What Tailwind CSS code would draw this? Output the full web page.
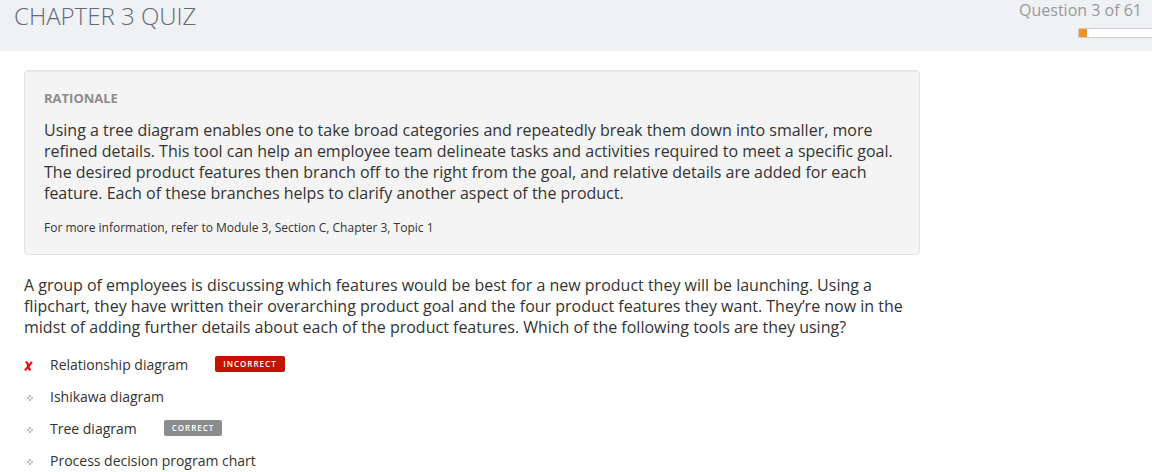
<!DOCTYPE html>
<html lang="en">
<head>
<meta charset="utf-8">
<meta name="viewport" content="width=device-width, initial-scale=1">
<title>Chapter 3 Quiz</title>
<script src="https://cdn.jsdelivr.net/npm/@tailwindcss/browser@4"></script>
</head>
<body class="bg-white font-['Open_Sans',sans-serif] text-[#333333] overflow-x-hidden">
<header class="flex items-start justify-between bg-[#eff1f5] pb-[13px] pl-[14px]">
  <h1 class="text-2xl leading-8 font-light text-[#5f6b78]">CHAPTER 3 QUIZ</h1>
  <div class="flex flex-col items-end">
    <p id="progress" class="pr-[10px] text-base leading-[21px] text-[#999999]">Question 3 of 61</p>
    <div role="progressbar" aria-labelledby="progress" aria-valuenow="3" aria-valuemin="0" aria-valuemax="61" class="mt-[7px] h-[10px] w-[74px] rounded-l-xs border border-r-0 border-[#cccccc] bg-white">
      <div class="h-full w-2 bg-[#f59322]"></div>
    </div>
  </div>
</header>
<main class="max-w-[944px] px-6 pt-[19px]">
  <section class="rounded border border-[#e3e3e3] bg-[#f4f4f4] px-[19px] pt-[17px] pb-4 shadow-[inset_0_1px_1px_rgba(0,0,0,0.05)]">
    <h2 class="text-[13px] leading-5 font-bold text-[#8c8c8c]">RATIONALE</h2>
    <p class="mt-3 text-base leading-[21px]">Using a tree diagram enables one to take broad categories and repeatedly break them down into smaller, more refined details. This tool can help an employee team delineate tasks and activities required to meet a specific goal. The desired product features then branch off to the right from the goal, and relative details are added for each feature. Each of these branches helps to clarify another aspect of the product.</p>
    <p class="mt-[14px] text-xs leading-5">For more information, refer to Module 3, Section C, Chapter 3, Topic 1</p>
  </section>
  <p class="mt-5 text-base leading-[21px]">A group of employees is discussing which features would be best for a new product they will be launching. Using a flipchart, they have written their overarching product goal and the four product features they want. They’re now in the midst of adding further details about each of the product features. Which of the following tools are they using?</p>
  <ul class="mt-[11px] text-sm leading-8">
    <li class="flex items-center">
      <svg class="mt-[2px] h-[10px] w-[26px]" viewBox="0 0 26 10" fill="none" stroke="#ff0000" aria-hidden="true"><path d="M1.6 1.7Q2.8 1 3.4 2.4L5 7.6Q5.4 8.9 6.8 8.3" stroke-width="2.2"/><path d="M8 1L.9 9.4" stroke-width="2"/></svg>
      <span>Relationship diagram</span>
      <span class="mb-[2px] ml-[27px] rounded-xs bg-[#c41200] px-2 text-[8px] leading-4 font-semibold tracking-[1px] text-white">INCORRECT</span>
    </li>
    <li class="flex items-center">
      <svg class="mt-[2px] h-[6px] w-[26px]" viewBox="0 0 26 6" fill="#b8b8b8" aria-hidden="true"><path d="M5 0h2v2H5zM3 2h2v2H3zM7 2h2v2H7zM5 4h2v2H5z"/></svg>
      <span>Ishikawa diagram</span>
    </li>
    <li class="flex items-center">
      <svg class="mt-[2px] h-[6px] w-[26px]" viewBox="0 0 26 6" fill="#b8b8b8" aria-hidden="true"><path d="M5 0h2v2H5zM3 2h2v2H3zM7 2h2v2H7zM5 4h2v2H5z"/></svg>
      <span>Tree diagram</span>
      <span class="mb-[2px] ml-[27px] rounded-xs bg-[#8c8c8c] px-2 text-[8px] leading-4 font-semibold tracking-[1px] text-white">CORRECT</span>
    </li>
    <li class="flex items-center">
      <svg class="mt-[2px] h-[6px] w-[26px]" viewBox="0 0 26 6" fill="#b8b8b8" aria-hidden="true"><path d="M5 0h2v2H5zM3 2h2v2H3zM7 2h2v2H7zM5 4h2v2H5z"/></svg>
      <span>Process decision program chart</span>
    </li>
  </ul>
</main>
</body>
</html>
